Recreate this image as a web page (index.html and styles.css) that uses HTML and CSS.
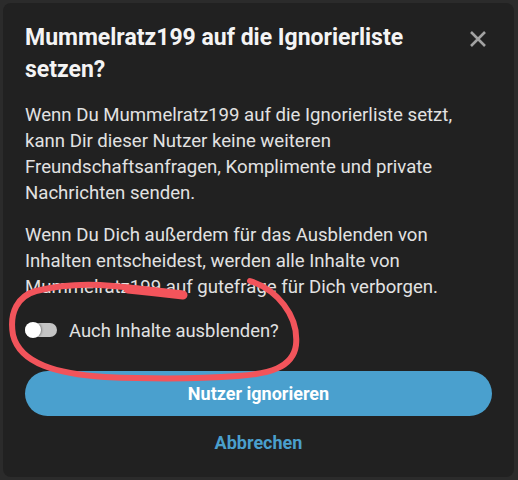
FILE: index.html
```html
<!DOCTYPE html>
<html lang="de">
<head>
    <meta charset="UTF-8">
    <title>Ignorierliste</title>
    <link rel="stylesheet" href="styles.css">
</head>
<body>
<div class="dialog">
    <div class="dialog-head">
        <h2 class="dialog-title">Mummelratz199 auf die Ignorierliste setzen?</h2>
        <span class="close">
            <svg width="18" height="18" viewBox="0 0 18 18">
                <path d="M2 2L16 16M16 2L2 16" stroke="#a2a2a2" stroke-width="2.6" fill="none"/>
            </svg>
        </span>
    </div>
    <p class="text">Wenn Du Mummelratz199 auf die Ignorierliste setzt, kann Dir dieser Nutzer keine weiteren Freundschaftsanfragen, Komplimente und private Nachrichten senden.</p>
    <p class="text">Wenn Du Dich außerdem für das Ausblenden von Inhalten entscheidest, werden alle Inhalte von Mummelratz199 auf gutefrage für Dich verborgen.</p>
    <label class="toggle-row">
        <span class="toggle"><span class="knob"></span></span>
        <span>Auch Inhalte ausblenden?</span>
    </label>
    <div class="btn-primary">Nutzer ignorieren</div>
    <div class="btn-link">Abbrechen</div>
</div>

<!-- rote Markierung aus dem Screenshot -->
<svg class="scribble" width="518" height="480" viewBox="0 0 518 480">
    <path d="M250 281 C 276 289, 299 315, 296 345 C 293 368, 268 374, 238 376 C 198 379, 150 379, 105 377 C 58 374, 20 364, 13 335 C 9 312, 18 296, 36 291 C 60 285, 80 284, 100 285 C 130 287, 158 291, 182 294"
          stroke="#f2545b" stroke-width="6" fill="none" stroke-linecap="round"/>
    <path d="M128 289 C 148 291, 166 293, 183 295" stroke="#f2545b" stroke-width="9" fill="none" stroke-linecap="round"/>
</svg>
</body>
</html>
```

FILE: styles.css
```css
*{
    margin: 0;
    padding: 0;
    box-sizing: border-box;
}
body{
    background: #2b2b2b;
    font-family: Roboto, "Liberation Sans", sans-serif;
    width: 518px;
    height: 480px;
    overflow: hidden;
}
.dialog{
    margin: 3px 4px 3px 3px;
    height: 474px;
    background: #212121;
    border-radius: 8px;
    padding: 19px 22px 0 22px;
    display: flex;
    flex-direction: column;
}
.dialog-head{
    display: flex;
    justify-content: space-between;
    align-items: flex-start;
    gap: 20px;
}
.dialog-title{
    font-size: 23px;
    line-height: 32px;
    font-weight: 700;
    color: #f4f4f4;
}
.close{
    margin-top: 8px;
    margin-right: 5px;
    display: flex;
}
.text{
    font-size: 18.6px;
    line-height: 26px;
    color: #e2e2e2;
    margin-top: 16px;
}
.text + .text{
    margin-top: 16px;
}
.toggle-row{
    display: flex;
    align-items: center;
    gap: 12px;
    margin-top: 17px;
    height: 26px;
    font-size: 18.4px;
    color: #e2e2e2;
}
.toggle{
    width: 32px;
    height: 14px;
    border-radius: 7px;
    background: #c4c4c4;
    position: relative;
    display: block;
}
.toggle .knob{
    position: absolute;
    left: 0;
    top: -1px;
    width: 16px;
    height: 16px;
    border-radius: 50%;
    background: #ffffff;
    box-shadow: 1px 0 2px rgba(0,0,0,0.35);
}
.btn-primary{
    margin-top: 28px;
    height: 45px;
    border-radius: 23px;
    background: #4aa0ce;
    color: #ffffff;
    font-size: 18px;
    font-weight: 700;
    display: flex;
    align-items: center;
    justify-content: center;
}
.btn-link{
    margin-top: 14px;
    line-height: 26px;
    text-align: center;
    font-size: 18px;
    font-weight: 700;
    color: #4a9fcc;
}
.scribble{
    position: absolute;
    top: 0;
    left: 0;
    pointer-events: none;
}
```
